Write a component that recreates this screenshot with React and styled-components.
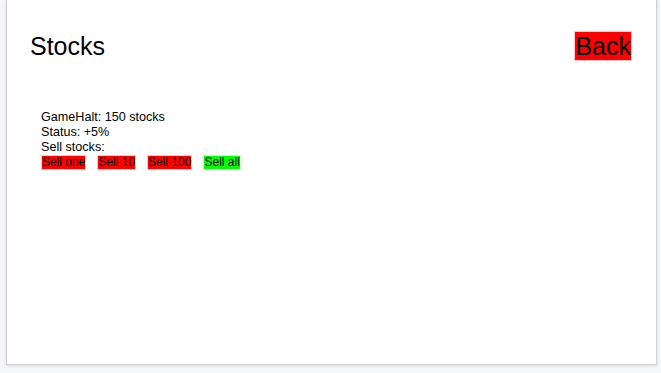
import React from 'react';
import styled, { createGlobalStyle } from 'styled-components';

const GlobalStyle = createGlobalStyle`
  html, body {
    margin: 0;
    padding: 0;
    background: #f4f6f9;
    font-family: "Liberation Sans", Arial, sans-serif;
    color: #000;
  }
`;

const Page = styled.div`
  padding: 0 4px 7px 6px;
`;

const Card = styled.div`
  height: 365px;
  box-sizing: border-box;
  background: #fff;
  border: 1px solid #cfcfcf;
  border-top: none;
  box-shadow: 0 1px 3px rgba(0, 0, 0, 0.12);
  padding: 31px 24px 0 23px;
`;

const Header = styled.div`
  display: flex;
  justify-content: space-between;
  align-items: center;
`;

const Title = styled.h1`
  margin: 0;
  font-size: 25px;
  font-weight: normal;
`;

const BackButton = styled.button`
  font-family: inherit;
  font-size: 25px;
  line-height: 28px;
  padding: 0;
  margin: 0;
  background: #ff0000;
  color: #000;
  border: 1px solid #ffc4c4;
  cursor: pointer;
`;

const Details = styled.div`
  margin-top: 49px;
  padding-left: 11px;
  font-size: 12.6px;
  line-height: 15px;
`;

const Line = styled.div``;

const Actions = styled.div`
  display: flex;
  gap: 11px;
`;

const SellButton = styled.button`
  font-family: inherit;
  font-size: 12px;
  line-height: 13px;
  padding: 0;
  margin: 0;
  color: #000;
  background: ${props => (props.$all ? '#00ff00' : '#ff0000')};
  border: 1px solid ${props => (props.$all ? '#c4ffc4' : '#ffc4c4')};
  cursor: pointer;
`;

export default function App() {
  return (
    <>
      <GlobalStyle />
      <Page>
        <Card>
          <Header>
            <Title>Stocks</Title>
            <BackButton>Back</BackButton>
          </Header>
          <Details>
            <Line>GameHalt: 150 stocks</Line>
            <Line>Status: +5%</Line>
            <Line>Sell stocks:</Line>
            <Actions>
              <SellButton>Sell one</SellButton>
              <SellButton>Sell 10</SellButton>
              <SellButton>Sell 100</SellButton>
              <SellButton $all>Sell all</SellButton>
            </Actions>
          </Details>
        </Card>
      </Page>
    </>
  );
}
